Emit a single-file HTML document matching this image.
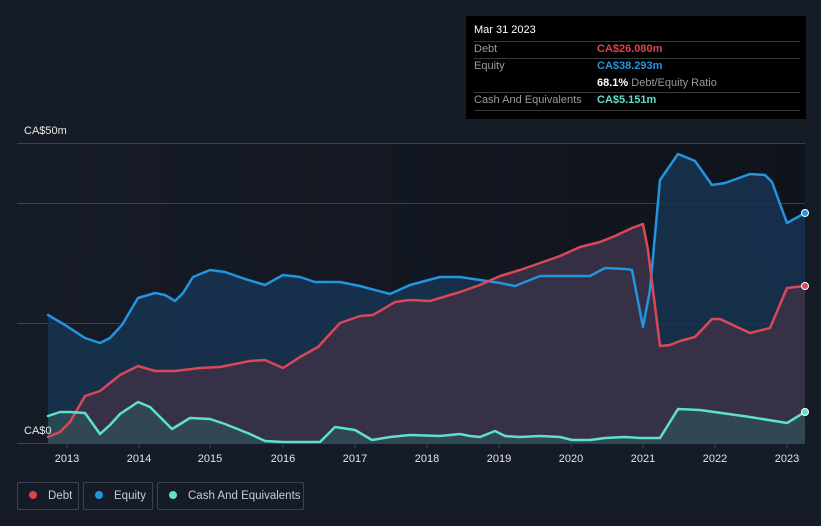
<!DOCTYPE html><html><head><meta charset="utf-8"><style>
html,body{margin:0;width:821px;height:526px;overflow:hidden}
body{background:#161c27;font-family:"Liberation Sans",sans-serif;position:relative}
.t{position:absolute;font-size:11px;color:#e8e8e8}
.tip{position:absolute;left:466px;top:16px;width:340px;height:103px;background:#000}
.tip div{position:absolute;font-size:11px;white-space:nowrap}
.ln{position:absolute;left:8px;width:326px;height:1px;background:#3a3a3a}
.lg{position:absolute;top:482px;height:28px;border:1px solid #3c4350;border-radius:2px;box-sizing:border-box;font-size:11.5px;color:#c9ccd2;line-height:26px;white-space:nowrap}
.dot{display:inline-block;width:8px;height:8px;border-radius:50%;margin:0 11px 0 11px}
</style></head><body>
<svg width="821" height="526" style="position:absolute;left:0;top:0">
<defs><linearGradient id="bg" x1="0" x2="1"><stop offset="0" stop-color="#161c27"/><stop offset="1" stop-color="#0f131b"/></linearGradient></defs>
<rect x="17" y="143" width="788" height="300" fill="url(#bg)"/>
<g stroke="#3a404b" stroke-width="1"><line x1="17" x2="805" y1="143.5" y2="143.5"/><line x1="17" x2="805" y1="203.5" y2="203.5"/><line x1="17" x2="805" y1="323.5" y2="323.5"/><line x1="17" x2="805" y1="443.5" y2="443.5"/></g>
<path fill="#173451" fill-opacity="0.85" d="M48,315 L65,325 85,338 100,343 110,338 122,325 138,298 155,293 165,295 175,301 183,293 193,277 210,270 225,272 245,279 265,285 283,275 300,277 315,282 340,282 360,286 390,294 410,285 440,277 460,277 480,280 500,283 515,286 540,276 560,276 590,276 605,268 625,269 632,270 643,327 650,290 660,180 678,154 695,161 712,185 725,183 750,174 765,175 772,182 787,223 805,213 L805,443 48,443Z"/>
<path fill="#3a3246" fill-opacity="0.92" d="M48,437 L60,432 70,422 85,396 100,391 120,375 138,366 155,371 175,371 200,368 220,367 250,361 265,360 283,368 300,357 318,347 340,323 360,316 373,315 395,302 410,300 430,301 460,292 480,285 500,276 520,270 540,263 560,256 580,247 600,242 615,236 632,228 643,224 648,250 660,346 670,345 680,341 695,337 712,319 720,319 750,333 770,328 787,288 805,286 L805,443 48,443Z"/>
<path fill="#2f5257" fill-opacity="0.7" d="M48,416 L60,412 70,412 85,413 100,434 110,425 120,414 138,402 150,407 162,419 172,429 190,418 210,419 225,424 250,434 265,441 283,442 320,442 335,427 355,430 372,440 390,437 410,435 440,436 460,434 470,436 480,437 495,431 505,436 520,437 540,436 560,437 572,440 590,440 605,438 625,437 640,438 660,438 678,409 700,410 750,417 787,423 805,412 L805,443 48,443Z"/>
<g fill="none" stroke-width="2.5" stroke-linejoin="round" stroke-linecap="round">
<path stroke="#2394df" d="M48,315 L65,325 85,338 100,343 110,338 122,325 138,298 155,293 165,295 175,301 183,293 193,277 210,270 225,272 245,279 265,285 283,275 300,277 315,282 340,282 360,286 390,294 410,285 440,277 460,277 480,280 500,283 515,286 540,276 560,276 590,276 605,268 625,269 632,270 643,327 650,290 660,180 678,154 695,161 712,185 725,183 750,174 765,175 772,182 787,223 805,213"/>
<path stroke="#d9485a" d="M48,437 L60,432 70,422 85,396 100,391 120,375 138,366 155,371 175,371 200,368 220,367 250,361 265,360 283,368 300,357 318,347 340,323 360,316 373,315 395,302 410,300 430,301 460,292 480,285 500,276 520,270 540,263 560,256 580,247 600,242 615,236 632,228 643,224 648,250 660,346 670,345 680,341 695,337 712,319 720,319 750,333 770,328 787,288 805,286"/>
<path stroke="#5ee0cc" d="M48,416 L60,412 70,412 85,413 100,434 110,425 120,414 138,402 150,407 162,419 172,429 190,418 210,419 225,424 250,434 265,441 283,442 320,442 335,427 355,430 372,440 390,437 410,435 440,436 460,434 470,436 480,437 495,431 505,436 520,437 540,436 560,437 572,440 590,440 605,438 625,437 640,438 660,438 678,409 700,410 750,417 787,423 805,412"/>
</g>
<circle cx="805" cy="213" r="3.5" fill="#2394df" stroke="#fff" stroke-width="1"/>
<circle cx="805" cy="286" r="3.5" fill="#d9485a" stroke="#fff" stroke-width="1"/>
<circle cx="805" cy="412" r="3.5" fill="#5ee0cc" stroke="#fff" stroke-width="1"/>
<g stroke="#3a404b"><line x1="67" x2="67" y1="443" y2="448"/><line x1="139" x2="139" y1="443" y2="448"/><line x1="210" x2="210" y1="443" y2="448"/><line x1="283" x2="283" y1="443" y2="448"/><line x1="355" x2="355" y1="443" y2="448"/><line x1="427" x2="427" y1="443" y2="448"/><line x1="499" x2="499" y1="443" y2="448"/><line x1="571" x2="571" y1="443" y2="448"/><line x1="643" x2="643" y1="443" y2="448"/><line x1="715" x2="715" y1="443" y2="448"/><line x1="787" x2="787" y1="443" y2="448"/></g>
<g fill="#e0e2e6" font-size="11" text-anchor="middle" font-family="Liberation Sans"><text x="67" y="462">2013</text><text x="139" y="462">2014</text><text x="210" y="462">2015</text><text x="283" y="462">2016</text><text x="355" y="462">2017</text><text x="427" y="462">2018</text><text x="499" y="462">2019</text><text x="571" y="462">2020</text><text x="643" y="462">2021</text><text x="715" y="462">2022</text><text x="787" y="462">2023</text></g>
</svg>
<div class="t" style="left:24px;top:125px">CA$50m</div>
<div class="t" style="left:24px;top:425px">CA$0</div>
<div class="tip">
<div style="left:8px;top:8px;color:#fff">Mar 31 2023</div>
<div class="ln" style="top:25px"></div>
<div style="left:8px;top:27px;color:#9a9a9a">Debt</div><div style="left:131px;top:27px;color:#e0424a;font-weight:bold">CA$26.080m</div>
<div class="ln" style="top:42px"></div>
<div style="left:8px;top:44px;color:#9a9a9a">Equity</div><div style="left:131px;top:44px;color:#2394df;font-weight:bold">CA$38.293m</div>
<div style="left:131px;top:61px;color:#9a9a9a"><b style="color:#fff">68.1%</b> Debt/Equity Ratio</div>
<div class="ln" style="top:76px"></div>
<div style="left:8px;top:78px;color:#9a9a9a">Cash And Equivalents</div><div style="left:131px;top:78px;color:#5ee0cc;font-weight:bold">CA$5.151m</div>
<div class="ln" style="top:94px"></div>
</div>
<div class="lg" style="left:17px;width:62px"><span class="dot" style="background:#e0424a"></span>Debt</div>
<div class="lg" style="left:83px;width:70px"><span class="dot" style="background:#2394df"></span>Equity</div>
<div class="lg" style="left:157px;width:147px"><span class="dot" style="background:#5ee0cc"></span>Cash And Equivalents</div>
</body></html>
